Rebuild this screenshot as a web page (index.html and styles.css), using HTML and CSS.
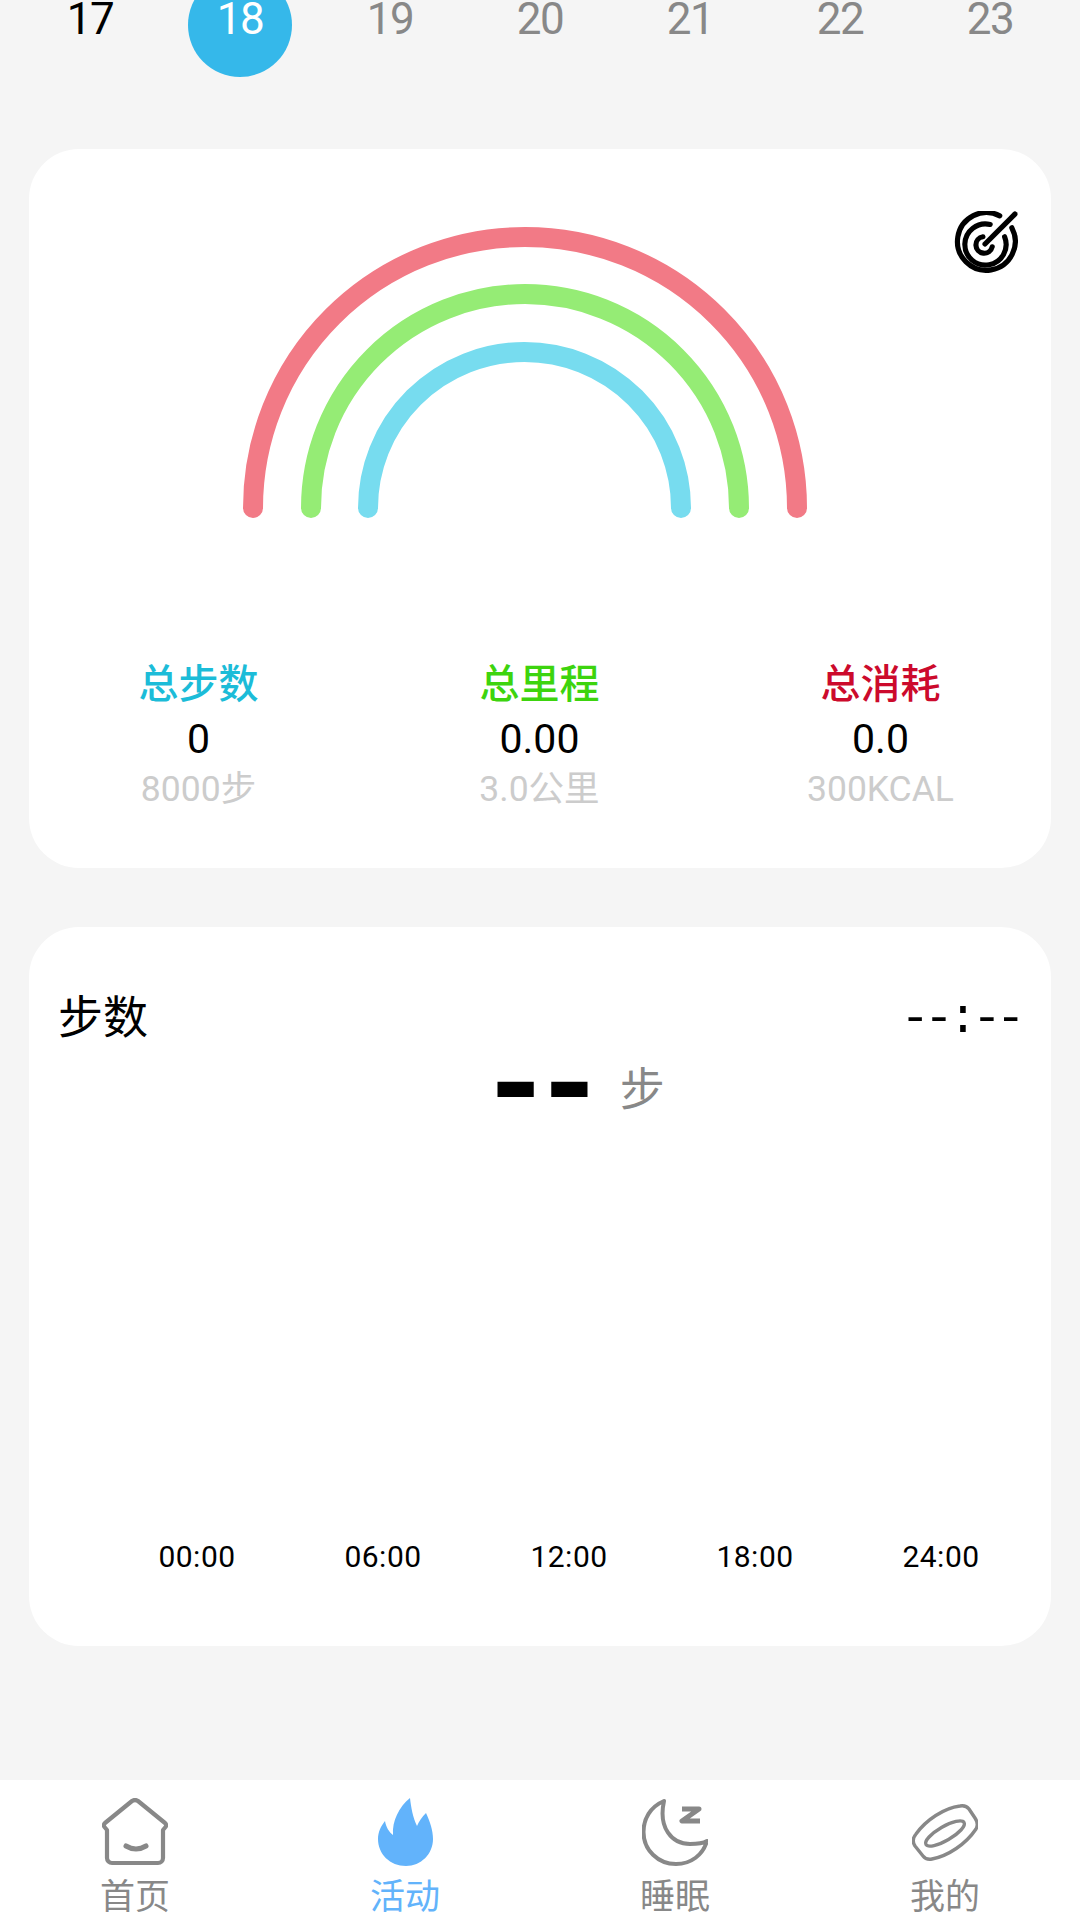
FILE: index.html
```html
<!DOCTYPE html>
<html lang="zh-CN">
<head>
  <meta charset="UTF-8" />
  <meta name="viewport" content="width=device-width, initial-scale=1.0"/>
  <title>活动</title>
  <link rel="stylesheet" href="styles.css">
</head>
<body>
  <div class="date-row">
    <span class="date past">17</span>
    <span class="date selected">18</span>
    <span class="date">19</span>
    <span class="date">20</span>
    <span class="date">21</span>
    <span class="date">22</span>
    <span class="date">23</span>
  </div>

  <section class="card summary">
    <svg class="target-icon" viewBox="0 0 64 64" fill="none" stroke="#000" stroke-width="5" stroke-linecap="round">
      <path d="M46.3 4.700A28 28 0 1 0 58 16.300"/>
      <path d="M37 13A20 20 0 1 0 51 25"/>
      <path d="M30 25A8 8 0 1 0 39 34.700"/>
      <path d="M32 32L61 3"/>
    </svg>
    <svg class="rainbow" viewBox="243 217 564 301" fill="none" stroke-width="20" stroke-linecap="round">
      <path d="M253 508A272 271 0 0 1 797 508" stroke="#f27a86"/>
      <path d="M311 508A214 214 0 0 1 739 508" stroke="#95ec75"/>
      <path d="M368 508A156.500 156 0 0 1 681 508" stroke="#77dcef"/>
    </svg>
    <div class="stats">
      <div class="stat">
        <div class="stat-label steps">总步数</div>
        <div class="stat-value">0</div>
        <div class="stat-goal">8000步</div>
      </div>
      <div class="stat">
        <div class="stat-label distance">总里程</div>
        <div class="stat-value">0.00</div>
        <div class="stat-goal">3.0公里</div>
      </div>
      <div class="stat">
        <div class="stat-label calories">总消耗</div>
        <div class="stat-value">0.0</div>
        <div class="stat-goal">300KCAL</div>
      </div>
    </div>
  </section>

  <section class="card chart">
    <div class="chart-head">
      <span class="chart-title">步数</span>
      <span class="chart-time">--:--</span>
    </div>
    <div class="chart-reading">
      <span class="reading-value">--</span>
      <span class="reading-unit">步</span>
    </div>
    <div class="chart-axis">
      <span>00:00</span>
      <span>06:00</span>
      <span>12:00</span>
      <span>18:00</span>
      <span>24:00</span>
    </div>
  </section>

  <nav class="tabbar">
    <div class="tab">
      <svg class="tab-icon" viewBox="0 0 66 68" fill="none" stroke="#888" stroke-width="4.200" stroke-linejoin="round" stroke-linecap="round">
        <path d="M5 32L2.500 29Q1 27 3 25L30 3Q33 1 36 3L63 25Q65 27 63.500 29L61 32V60A5 5 0 0 1 56 65H10A5 5 0 0 1 5 60Z"/>
        <path d="M24 48Q34 54 44 48" stroke-width="5"/>
      </svg>
      <span class="tab-label">首页</span>
    </div>
    <div class="tab active">
      <svg class="tab-icon" viewBox="0 0 55 68" fill="#62b3fb">
        <path d="M32 0C33 9 35 20 39 28C41 23 44 19 48 15C52 24 55 32 55 41C55 56 43 68 28 68C12 68 0 56 0 41C0 34 3 28 7 23C8 29 11 34 15 37C14 23 21 9 32 0Z"/>
      </svg>
      <span class="tab-label">活动</span>
    </div>
    <div class="tab">
      <svg class="tab-icon" viewBox="0 0 66 68" fill="none" stroke="#888" stroke-width="4" stroke-linejoin="round" stroke-linecap="round">
        <path d="M22 3C8 9 1.500 21 1.500 34C1.500 52 16 66 34 66C49 66 61 57 65 43C60 46 54 46 48 46C30 46 16 30 22 3Z"/>
        <path d="M40 11H57L40 23H58" stroke-width="5" stroke-linecap="butt"/>
      </svg>
      <span class="tab-label">睡眠</span>
    </div>
    <div class="tab">
      <svg class="tab-icon" viewBox="0 0 66 68" fill="none" stroke="#888" stroke-width="3.400" stroke-linejoin="round">
        <path d="M4 36C14 22 32 10 48 8Q54 7 57 11L63 20Q67 26 64 31C54 46 36 58 20 61Q14 62 11 58L3 48Q-1 42 4 36Z"/>
        <ellipse cx="33" cy="35.500" rx="22" ry="7" transform="rotate(-30 33 35.500)"/>
      </svg>
      <span class="tab-label">我的</span>
    </div>
  </nav>
</body>
</html>
```

FILE: styles.css
```css
* {
  box-sizing: border-box;
}

body {
  font-family: Roboto, 'Noto Sans CJK SC', sans-serif;
  background-color: #f5f5f5;
  color: #000;
  margin: 0;
  height: 1920px;
  overflow: hidden;
  display: flex;
  flex-direction: column;
}

.date-row {
  display: grid;
  grid-template-columns: repeat(7, 150px);
  padding-left: 15px;
  margin-top: -27px;
}

.date {
  height: 104px;
  display: flex;
  align-items: center;
  justify-content: center;
  font-size: 44px;
  line-height: 36px;
  letter-spacing: -1.500px;
  color: #888;
  padding-bottom: 13px;
}

.date.past {
  color: #000;
}

.date.selected {
  width: 104px;
  justify-self: center;
  background: #35b8ea;
  border-radius: 50%;
  color: #fff;
}

.card {
  background: #fff;
  border-radius: 50px;
  margin: 0 29px;
  height: 719px;
  position: relative;
}

.summary {
  margin-top: 72px;
  padding-top: 68px;
}

.target-icon {
  position: absolute;
  top: 62px;
  right: 33px;
  width: 66px;
  height: 66px;
}

.rainbow {
  display: block;
  width: 564px;
  height: 301px;
  margin-left: 214px;
}

.stats {
  display: grid;
  grid-template-columns: repeat(3, 341px);
  margin-top: 140px;
  margin-left: -1px;
  text-align: center;
}

.stat-label {
  font-size: 40px;
  font-weight: 500;
  line-height: 54px;
}

.steps {
  color: #1cbcd8;
}

.distance {
  color: #3dd40e;
}

.calories {
  color: #cc0a2c;
}

.stat-value {
  font-size: 41px;
  line-height: 54px;
}

.stat-goal {
  font-size: 35.500px;
  line-height: 46px;
  color: #ccc;
}

.chart {
  margin-top: 59px;
  padding: 62px 31px 0;
}

.chart-head {
  display: flex;
  justify-content: space-between;
  align-items: center;
  height: 60px;
}

.chart-title {
  font-size: 45px;
  line-height: 60px;
  margin-left: -2px;
}

.chart-time {
  font-family: 'Liberation Mono', monospace;
  font-size: 49px;
  letter-spacing: -5.500px;
}

.chart-reading {
  display: flex;
  justify-content: center;
  align-items: center;
  gap: 35px;
  margin-top: 6px;
  padding-left: 62px;
  height: 62px;
}

.reading-value {
  font-family: 'Liberation Mono', monospace;
  font-size: 128px;
  font-weight: bold;
  letter-spacing: -23px;
  line-height: 62px;
  margin-top: 6px;
}

.reading-unit {
  font-size: 45px;
  color: #888;
}

.chart-axis {
  display: grid;
  grid-template-columns: repeat(5, 186px);
  margin: 422px 0 0 44px;
  text-align: center;
  font-size: 30px;
  letter-spacing: 0.500px;
}

.tabbar {
  margin-top: auto;
  height: 140px;
  background: #fff;
  display: grid;
  grid-template-columns: repeat(4, 270px);
  padding-top: 18px;
}

.tab {
  display: flex;
  flex-direction: column;
  align-items: center;
  color: #888;
}

.tab.active {
  color: #62b3fb;
}

.tab-icon {
  width: auto;
  height: 68px;
}

.tab-label {
  font-size: 35px;
  line-height: 48px;
  margin-top: 8px;
}
```
